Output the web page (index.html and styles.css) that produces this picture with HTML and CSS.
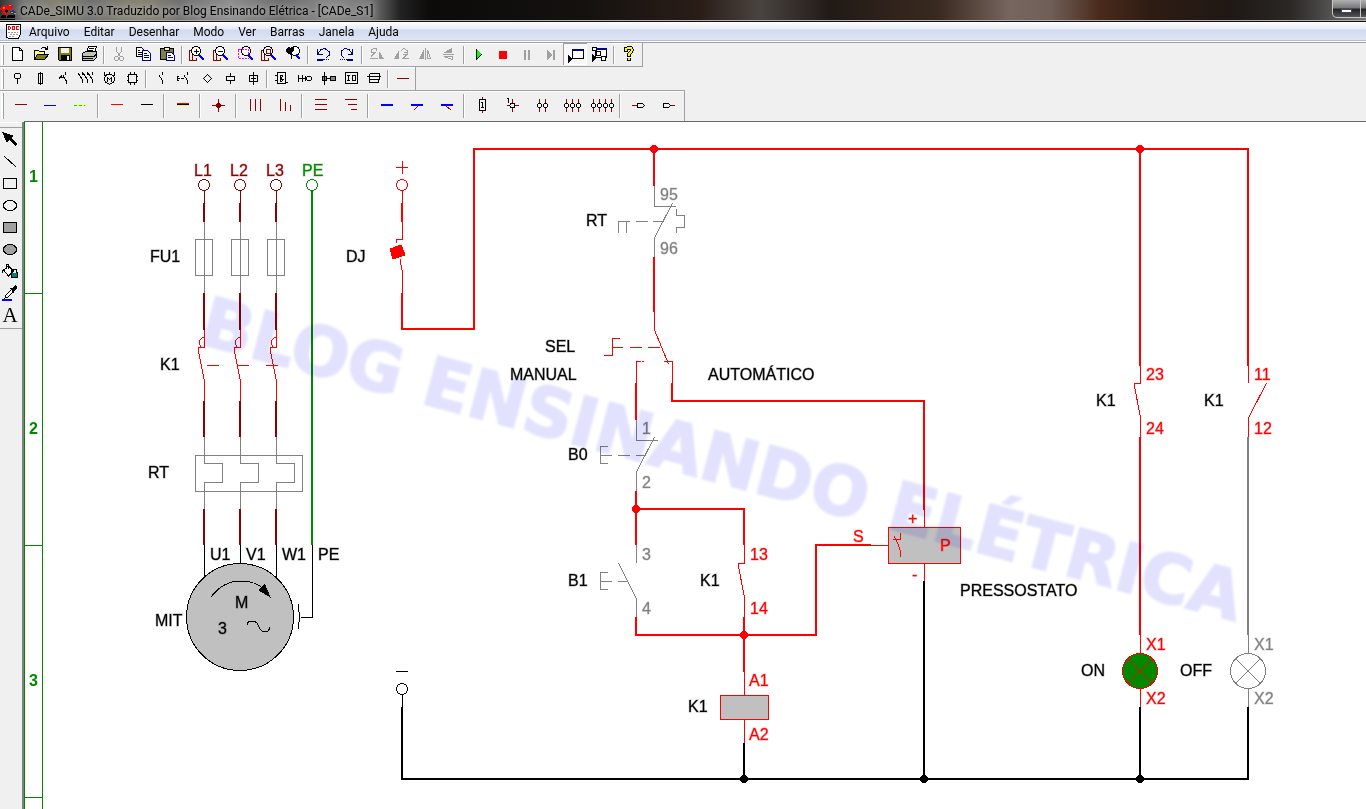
FILE: index.html
```html
<!DOCTYPE html>
<html lang="pt-BR">
<head>
<meta charset="utf-8">
<title>CADe_SIMU 3.0 Traduzido por Blog Ensinando Elétrica - [CADe_S1]</title>
<link rel="stylesheet" href="styles.css">
</head>
<body>
<header class="titlebar">
  <svg class="app-icon" viewBox="0 0 18 18" aria-hidden="true"><path fill="#e01010" d="M1 5l3-2 3 1 3-2 3 3-2 3-3 1v3l-3 1-3-2 1-2-3-1z"/><path fill="#ff6a50" d="M3 5h2v2H3zM9 3h2v1H9z"/><path fill="#000" d="M5 8l2-1 1 2-2 2zM2 13h4v3H1zM8 13h7v3H7z"/><path fill="#283080" d="M10 9l3-1 3 3-1 2-4-1z"/><path fill="#c8a020" d="M11 10h2v1h-2zM14 11h2v1h-2z"/><path stroke="#000" d="M0 17.500h15"/></svg>
  <h1 class="title">CADe_SIMU 3.0 Traduzido por Blog Ensinando Elétrica - [CADe_S1]</h1>
  <div class="win-buttons">
    <button class="win-min" aria-label="Minimizar"><span class="win-glyph"></span></button>
    <button class="win-next" aria-label="Maximizar"></button>
  </div>
</header>

<nav class="menubar">
  <svg class="doc-icon" viewBox="0 0 16 16" aria-hidden="true"><path fill="#fff" stroke="#000" d="M.5 .5h14v9l-2 5h-5l-4 .5-3-2z"/><path fill="none" stroke="#f00" d="M2.500 2v4M3 2.500h1M3 5.500h1M4.500 3v2M6.500 2.500h2v3h-2zM13 2.500h-2.500v3h2.500"/><path stroke="#999" d="M2 8.500h10M4 10.500h8M3 12.500h6" stroke-dasharray="2 1"/></svg>
  <button>Arquivo</button><button>Editar</button><button>Desenhar</button><button>Modo</button><button>Ver</button><button>Barras</button><button>Janela</button><button>Ajuda</button>
</nav>

<div class="toolbars">
  <div class="bar bar-main" role="toolbar" aria-label="Principal">
    <button aria-label="Novo"><svg viewBox="0 0 20 20"><path class="k w" d="M5.500 3.500h7l3 3v9.500h-10zM12.500 3.500v3h3"/></svg></button>
    <button aria-label="Abrir"><svg viewBox="0 0 20 20"><path class="k" fill="#ffff80" d="M3.500 15.500v-9h4l1 1h5v3"/><path class="k" fill="#808000" d="M3.500 15.500l3-5h11l-4 5z"/><path class="k" d="M10 4.500l2-1h2l2 2M16.500 2v4M14 5.500h2"/></svg></button>
    <button aria-label="Salvar"><svg viewBox="0 0 20 20"><path class="k" fill="#808000" d="M3.500 3.500h13v13h-12l-1-1z"/><path fill="#f0f0f0" d="M6 4h8v5H6z"/><path fill="#000" d="M6 11h9v6H6z"/><path fill="#f0f0f0" d="M12 12h2v4h-2z"/></svg></button>
    <button aria-label="Imprimir"><svg viewBox="0 0 20 20"><path class="k w" d="M7.500 9l2-6.500h8l-2 6.500M10 4.500h5M9 6.500h5"/><path class="k" fill="#c0c0c0" d="M3.500 9.500l3-2h11v6l-3 3h-11z"/><path class="k" d="M3 12.500h12M15 12.500l3-3M4 14.500h10"/><path stroke="#e0d000" d="M9 13.500h3"/></svg></button>
    <span class="sep"></span>
    <button aria-label="Recortar" disabled><svg viewBox="0 0 20 20"><path class="g" d="M7.500 3v4l4 6M12.500 3v4l-4 6"/><circle class="g" cx="7.500" cy="14.500" r="2"/><circle class="g" cx="12.500" cy="14.500" r="2"/></svg></button>
    <button aria-label="Copiar"><svg viewBox="0 0 20 20"><path class="k w" d="M3.500 3.500h5l3 3v6h-8zM5 6.500h2M5 8.500h4M5 10.500h4"/><path class="n w" d="M9.500 6.500h5l3 3v7h-8zM11 9.500h3M11 11.500h5M11 13.500h5"/></svg></button>
    <button aria-label="Colar"><svg viewBox="0 0 20 20"><path class="k" fill="#808040" d="M3.500 4.500h13v11h-13z"/><path class="k" fill="#ffff60" d="M7.500 3.500h5v3h-5z"/><path class="n w" d="M9.500 8.500h5l3 3v5h-8zM11 11.500h3M11 13.500h5"/></svg></button>
    <span class="sep"></span>
    <button aria-label="Aumentar zoom"><svg viewBox="0 0 20 20"><path class="r" d="M2.500 6v11M2 6.500h3M2.500 16.500h7v-3M5.500 11v5M2 16h8"/><circle class="k w" cx="9" cy="7" r="4.500"/><path class="k" d="M7 7.500h5M9.500 5v5"/><path class="b2" d="M12 11l5 5"/></svg></button>
    <button aria-label="Diminuir zoom"><svg viewBox="0 0 20 20"><path class="r" d="M2.500 6v11M2 6.500h3M2.500 16.500h7v-3M5.500 11v5M2 16h8"/><circle class="k w" cx="9" cy="7" r="4.500"/><path class="k" d="M7 7.500h5"/><path class="b2" d="M12 11l5 5"/></svg></button>
    <button aria-label="Zoom da janela"><svg viewBox="0 0 20 20"><circle class="k w" cx="11" cy="7" r="4.500"/><path fill="none" stroke="#f0f" stroke-dasharray="2 1" d="M3.500 5.500h10v9h-10z"/><path class="b2" d="M13 11l5 5"/></svg></button>
    <button aria-label="Zoom da página"><svg viewBox="0 0 20 20"><path class="r" d="M2.500 6v11M2 6.500h3M2.500 16.500h7v-3M5.500 11v5M2 16h8"/><circle class="k w" cx="9" cy="7" r="4.500"/><path class="r" d="M7.500 5.500h4v4h-4z"/><path class="b2" d="M12 11l5 5"/></svg></button>
    <button aria-label="Zoom anterior"><svg viewBox="0 0 20 20"><circle class="k w" cx="12" cy="7" r="4.500"/><path fill="#000" d="M3 5l2-2 4 1 2-1v3l-2 3-1 3-2-2-3-2z"/><path class="k" d="M9 9l-1 6"/><path class="b2" d="M13 11l4 4"/></svg></button>
    <span class="sep"></span>
    <button aria-label="Desfazer"><svg viewBox="0 0 20 20"><path class="n" d="M4.500 5v5h5M5 9.500l3-4 4-1 4 3v4l-3 2M4 15.500h7"/><path class="n" d="M4 16.500h6"/><path class="n" stroke-dasharray="1 1" d="M11 15.500h6"/></svg></button>
    <button aria-label="Refazer"><svg viewBox="0 0 20 20"><path class="n" d="M15.500 5v5h-5M15 9.500l-3-4-4-1-4 3v4l3 2M9 15.500h7"/><path class="n" d="M10 16.500h6"/><path class="n" stroke-dasharray="1 1" d="M3 15.500h6"/></svg></button>
    <span class="sep"></span>
    <button aria-label="Girar à esquerda" disabled><svg viewBox="0 0 20 20"><path class="g" d="M4.500 8v-2l2-1.500h3v2M4 8.500h5M4 12.500l4-4M3 14.500h8"/><path fill="#a0a0a0" d="M12 7l5 8h-5z"/></svg></button>
    <button aria-label="Girar à direita" disabled><svg viewBox="0 0 20 20"><path fill="#a0a0a0" d="M8 6v9H3z"/><path class="g" d="M10 6.500l3-2 3 2v3M13 8.500h4M11.500 10.500h5l-5 4h6"/></svg></button>
    <button aria-label="Espelhar na horizontal" disabled><svg viewBox="0 0 20 20"><path fill="#a0a0a0" d="M9 5v10H4zM10 4h1v12h-1z"/><path class="g" d="M12.500 6v8.500h3z"/></svg></button>
    <button aria-label="Espelhar na vertical" disabled><svg viewBox="0 0 20 20"><path fill="#a0a0a0" d="M4 9l9-5v5zM4 10h11v1H4z"/><path class="g" d="M5 12.500h8v3z"/></svg></button>
    <span class="sep"></span>
    <button aria-label="Simular"><svg viewBox="0 0 20 20"><path fill="#000" d="M7 5l6 5-5 6H7z"/><path fill="#0f0" d="M8 6l4 4-4 5z"/></svg></button>
    <button aria-label="Parar"><svg viewBox="0 0 20 20"><path fill="#f00" d="M6 7h8v8H6z"/></svg></button>
    <button aria-label="Pausar" disabled><svg viewBox="0 0 20 20"><path fill="#a0a0a0" d="M7 6h2v10H7zM11 6h2v10h-2z"/></svg></button>
    <button aria-label="Passo a passo" disabled><svg viewBox="0 0 20 20"><path fill="#a0a0a0" d="M6 6l5 5-5 5zM12 6h2v10h-2z"/></svg></button>
    <button class="pressed" aria-label="Janela do componente" aria-pressed="true"><svg viewBox="0 0 20 20"><path class="k w" d="M7.500 5.500h11v9h-11z"/><path fill="#00a" d="M8 5h10v2H8z"/><path fill="#000" d="M3 11l4 4-4 4z"/></svg></button>
    <button aria-label="Árvore de componentes"><svg viewBox="0 0 20 20"><path class="k w" d="M6.500 4.500h11v9h-11z"/><path fill="#008" d="M7 4h11v2H7z"/><path class="k w" d="M3.500 3.500h4v3h-4zM7.500 7.500h4v4h-4zM12.500 12.500h4v4h-4z"/><path fill="#000" d="M3 10l5 4-5 4z"/></svg></button>
    <span class="sep"></span>
    <button aria-label="Ajuda do programa"><svg viewBox="0 0 20 20"><path fill="none" stroke="#000" stroke-width="4" d="M7 8V5l2-1h3l1 2-1 2-2 2v3M10 14v3"/><path fill="none" stroke="#ff0" stroke-width="2" d="M7 7V5l2-1h3l1 2-1 2-2 2v2M10 14v2"/></svg></button>
  </div>

  <div class="bar bar-parts" role="toolbar" aria-label="Componentes">
    <button aria-label="Alimentação"><svg viewBox="0 0 20 20"><circle class="k" cx="10.500" cy="8" r="3"/><path class="k" d="M10.500 11v5"/></svg></button>
    <button aria-label="Fusíveis"><svg viewBox="0 0 20 20"><path class="k" d="M8.500 5.500h4v10h-4zM10.500 4v13"/></svg></button>
    <button aria-label="Disjuntores"><svg viewBox="0 0 20 20"><path class="k" d="M12.500 4v3M10 7.500l3 5v3M6 10.500l3-3M7 9.500h4"/></svg></button>
    <button aria-label="Contatores de potência"><svg viewBox="0 0 20 20"><path class="k" d="M6.500 4v3M2 5l4 6v4M11.500 4v3M7 5l4 6v4M16.500 4v3M12 5l4 6v4"/></svg></button>
    <button aria-label="Motores"><svg viewBox="0 0 20 20"><circle class="k" cx="10.500" cy="11" r="5"/><path class="k" d="M8.500 13.500v-4l2 2 2-2v4M5.500 4v4M10.500 4v2M15.500 4v4"/></svg></button>
    <button aria-label="Eletrônica de potência"><svg viewBox="0 0 20 20"><path class="k" d="M6.500 6.500h8v8h-8zM8.500 4v2M12.500 4v2M8.500 15v2M12.500 15v2M5 8.500h1M5 12.500h1M15 8.500h1M15 12.500h1"/></svg></button>
    <span class="sep"></span>
    <button aria-label="Contatos"><svg viewBox="0 0 20 20"><path class="k" d="M11.500 4v3M8 7l3 5v4"/></svg></button>
    <button aria-label="Botões"><svg viewBox="0 0 20 20"><path class="k" d="M13.500 4v3M10 7l3 5v4M5 8.500h-2v4h2M3 10.500h3M7 10.500h3"/></svg></button>
    <button aria-label="Sensores"><svg viewBox="0 0 20 20"><path class="k" d="M10.500 6.500l4 4-4 4-4-4z"/></svg></button>
    <button aria-label="Bobinas"><svg viewBox="0 0 20 20"><path class="k" d="M6.500 8.500h8v4h-8zM10.500 5v3M10.500 13v3"/></svg></button>
    <button aria-label="Sinalizadores"><svg viewBox="0 0 20 20"><path class="k" d="M6.500 7.500h8v6h-8zM10.500 4v13M8 10.500h5"/></svg></button>
    <span class="sep"></span>
    <button aria-label="Portas lógicas"><svg viewBox="0 0 20 20"><path class="k" d="M5.500 4.500h8v11h-8zM3 7.500h3M3 12.500h3M13 14.500h3M11 13l-3-4 1-2h1v2l-2 2v2h2l2-2"/></svg></button>
    <button aria-label="Eletropneumática"><svg viewBox="0 0 20 20"><path class="k" d="M3.500 7v7M3 10.500h9M7.500 7v7M10.500 8v5"/><circle class="k" cx="14" cy="10.500" r="2.500"/></svg></button>
    <button aria-label="Eixos"><svg viewBox="0 0 20 20"><path class="k" fill="#888" d="M4.500 8.500h4v4h-4zM12.500 8.500h5v4h-5z"/><path class="k" d="M8 10.500h5M6.500 4v13"/></svg></button>
    <button aria-label="Entradas e saídas"><svg viewBox="0 0 20 20"><path class="k" d="M4.500 4.500h12v11h-12zM6 7.500h3M7.500 7v6M6 12.500h3M11.500 7.500h3v5h-3z"/></svg></button>
    <button aria-label="Cabos"><svg viewBox="0 0 20 20"><path class="k" d="M5.500 5.500h10v6h-10v-6M3 8.500h14M5.500 11v3h8M14.500 12v3"/></svg></button>
    <span class="sep"></span>
    <button aria-label="Condutor"><svg viewBox="0 0 20 20"><path fill="#900000" d="M4 10h12v1H4z"/></svg></button>
  </div>

  <div class="bar bar-wires" role="toolbar" aria-label="Condutores">
    <button aria-label="Fio de fase"><svg viewBox="0 0 20 20"><path fill="#900000" d="M5 9h12v1H5z"/></svg></button>
    <button aria-label="Fio neutro"><svg viewBox="0 0 20 20"><path fill="#00f" d="M4 10h12v1H4z"/></svg></button>
    <button aria-label="Fio terra"><svg viewBox="0 0 20 20"><path fill="#ff0" d="M4 10h12v1H4z"/><path fill="#0d0" d="M4 10h3v1H4zM9 10h3v1H9zM14 10h1v1h-1z"/></svg></button>
    <span class="sep"></span>
    <button aria-label="Fio positivo"><svg viewBox="0 0 20 20"><path fill="#f00" d="M5 9h12v1H5z"/></svg></button>
    <button aria-label="Fio negativo"><svg viewBox="0 0 20 20"><path fill="#000" d="M5 9h12v1H5z"/></svg></button>
    <span class="sep"></span>
    <button aria-label="Cabo múltiplo"><svg viewBox="0 0 20 20"><path fill="#f00" d="M5 8h12v1H5z"/><path fill="#000" d="M5 9h12v1H5z"/><path fill="#ff0" d="M5 10h12v1H5z"/></svg></button>
    <span class="sep"></span>
    <button aria-label="Conexão"><svg viewBox="0 0 20 20"><path class="r" d="M4 10.500h13M10.500 4v13"/><circle cx="10.500" cy="10.500" r="2.500" fill="#800000"/></svg></button>
    <span class="sep"></span>
    <button aria-label="Três fases verticais"><svg viewBox="0 0 20 20"><path class="r" d="M6.500 4v12M11.500 4v12M16.500 4v12"/></svg></button>
    <button aria-label="Três fases em degrau"><svg viewBox="0 0 20 20"><path class="r" d="M6.500 4v12M11.500 7v9M16.500 10v6"/></svg></button>
    <span class="sep"></span>
    <button aria-label="Três fases horizontais"><svg viewBox="0 0 20 20"><path class="r" d="M5 4.500h12M5 9.500h12M5 14.500h12"/></svg></button>
    <button aria-label="Derivação de fases"><svg viewBox="0 0 20 20"><path class="r" d="M5 4.500h12M8 9.500h9M11 14.500h6"/></svg></button>
    <span class="sep"></span>
    <button aria-label="Barramento"><svg viewBox="0 0 20 20"><path class="b2" d="M5 10h12"/></svg></button>
    <button aria-label="Derivação à esquerda"><svg viewBox="0 0 20 20"><path class="b2" d="M5 10h12"/><path class="r" d="M12 11l-4 4"/></svg></button>
    <button aria-label="Derivação à direita"><svg viewBox="0 0 20 20"><path class="b2" d="M5 10h12"/><path class="r" d="M10 11l5 4"/></svg></button>
    <span class="sep"></span>
    <button aria-label="Borne retangular"><svg viewBox="0 0 20 20"><path class="k" d="M7.500 4.500h6v11h-6zM9 7.500h1.500v5M9 12.500h3"/><path class="r" d="M10.500 2v2M10.500 16v2"/></svg></button>
    <button aria-label="Borne numerado"><svg viewBox="0 0 20 20"><path class="r" d="M10.500 4v4M10.500 13v4M5 10.500h3M13 10.500h4"/><circle class="k" cx="10.500" cy="10.500" r="2.500"/><path class="k" d="M5 3.500h1.500V8"/></svg></button>
    <button aria-label="Dois bornes"><svg viewBox="0 0 20 20"><path class="r" d="M7.500 4v13M13.500 4v13"/><circle class="k w" cx="7.500" cy="10.500" r="2"/><circle class="k w" cx="13.500" cy="10.500" r="2"/></svg></button>
    <button aria-label="Três bornes"><svg viewBox="0 0 20 20"><path class="r" d="M4.500 4v13M10.500 4v13M16.500 4v13"/><circle class="k w" cx="4.500" cy="10.500" r="2"/><circle class="k w" cx="10.500" cy="10.500" r="2"/><circle class="k w" cx="16.500" cy="10.500" r="2"/></svg></button>
    <button aria-label="Quatro bornes"><svg class="wide" viewBox="0 0 24 20"><path class="r" d="M3.500 4v13M9.500 4v13M15.500 4v13M21.500 4v13"/><circle class="k w" cx="3.500" cy="10.500" r="2"/><circle class="k w" cx="9.500" cy="10.500" r="2"/><circle class="k w" cx="15.500" cy="10.500" r="2"/><circle class="k w" cx="21.500" cy="10.500" r="2"/></svg></button>
    <span class="sep"></span>
    <button aria-label="Etiqueta de entrada"><svg viewBox="0 0 20 20"><path class="r" d="M4 10.500h5"/><path class="k" d="M9.500 8.500h5l2 2-2 2h-5z"/></svg></button>
    <button aria-label="Etiqueta de saída"><svg viewBox="0 0 20 20"><path class="r" d="M12 10.500h5"/><path class="k" d="M5.500 8.500h5l2 2-2 2h-5z"/></svg></button>
  </div>
</div>

<main class="workspace">
  <aside class="toolbox" role="toolbar" aria-label="Desenho">
    <button aria-label="Selecionar"><svg viewBox="0 0 20 20"><path fill="#000" d="M2 3l12 4-3 2 6 6-2 2-6-6-2 3z"/></svg></button>
    <button aria-label="Linha"><svg viewBox="0 0 20 20"><path class="k" d="M4 5l12 11"/></svg></button>
    <button aria-label="Retângulo"><svg viewBox="0 0 20 20"><path class="k" d="M3.500 5.500h13v10h-13z"/></svg></button>
    <button aria-label="Elipse"><svg viewBox="0 0 20 20"><ellipse class="k" cx="10" cy="10.500" rx="6.500" ry="5"/></svg></button>
    <button aria-label="Retângulo cheio"><svg viewBox="0 0 20 20"><path fill="#a0a0a0" stroke="#000" d="M3.500 5.500h13v10h-13z"/></svg></button>
    <button aria-label="Elipse cheia"><svg viewBox="0 0 20 20"><ellipse fill="#a0a0a0" stroke="#000" cx="10" cy="10.500" rx="6.500" ry="5"/></svg></button>
    <button aria-label="Preencher"><svg viewBox="0 0 20 20"><path class="k w" d="M3.500 9l5-4 5 5-5 5z"/><path class="k" d="M6.500 8V3h2v5M3 9l-1 3"/><path fill="#008080" d="M12 12h5v5h-5z"/><path class="k" d="M11 8.500h5l1 3v5h-6z"/></svg></button>
    <button aria-label="Cor da linha"><svg viewBox="0 0 20 20"><path stroke="#00f" stroke-width="2" d="M2 17h10"/><path class="k w" d="M5 15l1-3 6-6 2 2-6 6z"/><path fill="#000" d="M10 5l2 0 3-3 2 1v2l-3 3v3z"/></svg></button>
    <button class="text-tool" aria-label="Texto">A</button>
  </aside>

  <ol class="ruler">
    <li class="ruler-first">1</li><li>2</li><li>3</li><li class="ruler-last"></li>
  </ol>

  <svg class="canvas" viewBox="43 122 1323 687" preserveAspectRatio="xMinYMin meet" role="img" aria-label="Esquema de partida de motor com pressostato">
    <defs>
      <g id="phase-line">
        <g class="wine"><circle cx="0" cy="185" r="5.500"/><path d="M.5 191v12"/><path class="thick" d="M0 203v19M0 293v37M0 401v36M0 509v36"/></g>
        <path class="grey" d="M.5 222v71M-8.500 239.500h17v36h-17zM.5 437v26.500h18v19H.5V509"/>
        <path class="red" d="M.5 330v17.500h-6v4l6 29.500v20M.5 337.500h-2l-3 3v4l2 3"/>
      </g>
      <g id="closed-contact"><path d="M.5 0v18.500h-6v3l6 31V72"/></g>
    </defs>

    <!-- Power circuit -->
    <use href="#phase-line" x="204"/><use href="#phase-line" x="240"/><use href="#phase-line" x="276"/>
    <path class="red" d="M207 365.500h12M238 365.500h11M266 365.500h12"/>
    <path class="grey" d="M195.500 455.500h107v36h-107z"/>
    <g class="green"><circle cx="312" cy="185" r="5.500"/><path class="thick" d="M312 191v354"/></g>
    <path class="black" d="M204.500 545v35M240.500 545v20M276.500 545v35M312.500 545v72.500H301M298.500 604v8M299.500 612v10M298.500 622v7"/>
    <circle class="black metal" cx="240" cy="617" r="53.500"/>
    <path class="black" d="M211 597q12-16 30-16 15 0 24 9M247 625q0-4 5-4t7 6q2 5 6 5t5-5"/>
    <path d="M258 590l7-6 6 14z"/>

    <!-- Control circuit: energised wires -->
    <g class="red">
      <path d="M396 167.500h12M402.500 161v13"/>
      <circle cx="402" cy="185" r="5.500"/>
      <path d="M402.500 191v12M402.500 222v17.500h-6v3M400 259l2.500 14v20"/>
      <path class="fill-red" d="M390 249l11-4 4 10-12 4z"/>
      <path class="thick" d="M402 203v19M402 293v36h72V149h774v217M654 149v37M654 257v55"/>
      <path d="M654.500 312v18l14 34M604 355.500h8.500v-17h7M612 347.500h11M630 347.500h12M648 347.500h12"/>
      <path d="M636.500 383v-21.500h4M642 361.500h2M664 361.500h8.500V383"/>
      <path class="thick" d="M636 383v37M672 383v18h252v109M636 491v54M636 509h108v36M636 617v18h180v-90h55M744 617v55"/>
      <use href="#closed-contact" x="744" y="545"/>
      <path d="M744.500 672v23M744.500 719v24M871 545.500h17M924.500 510v17M924.500 563v18"/>
      <path class="metal" d="M720.500 695.500h48v24h-48zM888.500 527.500h72v36h-72z"/>
      <path d="M900.500 533v6.500h-8M894 536l4 8 2.500 7v6"/>
      <path class="thick" d="M1140 149v217M1140 437v198"/>
      <use href="#closed-contact" x="1140" y="365"/>
      <path d="M1248.500 366v17M1266.500 383l-18 35v19M1140.500 635v18M1140.500 689v18"/>
      <circle class="lamp-on" cx="1140" cy="671" r="17.500"/>
      <path d="M1127 658l26 26M1127 684l26-26"/>
    </g>

    <!-- Control circuit: idle parts -->
    <g class="grey">
      <path d="M654.500 186v20.500h21M672.500 203l-18 35v19M618.500 233v-11.500h11M626.500 221v12M636 221.500h12M653 221.500h11M676.500 209v6.500h8v12h-8v5"/>
      <path d="M636.500 420v20.500h21M654.500 437l-18 35v19M608 446.500h-7.500v17h7.500M601 455.500h11M618 455.500h12M636 455.500h9"/>
      <path d="M636.500 545v18M618.500 563l18 36v18M608 572.500h-7.500v17h7.500M601 581.500h11M618 581.500h9"/>
      <path class="thick" d="M1248 437v198"/>
      <path d="M1248.500 635v18M1248.500 689v18M1235 658l26 26M1235 684l26-26"/>
      <circle cx="1248" cy="671" r="17.500"/>
    </g>

    <!-- Return line -->
    <g class="black">
      <path d="M396 671.500h12M402.500 694v14"/>
      <circle cx="402" cy="689" r="5.500"/>
      <path class="thick" d="M402 707v72h846v-72M744 743v36M924 581v198M1140 707v72"/>
    </g>
    <g class="dots-red"><circle cx="654" cy="149" r="4"/><circle cx="1140" cy="149" r="4"/><circle cx="636" cy="509" r="4"/><circle cx="744" cy="635" r="4"/></g>
    <g class="dots"><circle cx="744" cy="779" r="4"/><circle cx="924" cy="779" r="4"/><circle cx="1140" cy="779" r="4"/></g>

    <g class="label">
      <text x="150" y="262">FU1</text><text x="346" y="262">DJ</text><text x="160" y="370">K1</text><text x="148" y="478">RT</text><text x="155" y="626">MIT</text>
      <text x="210" y="560">U1</text><text x="246" y="560">V1</text><text x="282" y="560">W1</text><text x="318" y="560">PE</text>
      <text x="235" y="608">M</text><text x="218" y="634">3</text>
      <text x="586" y="226">RT</text><text x="545" y="352">SEL</text><text x="510" y="380">MANUAL</text><text x="708" y="380">AUTOMÁTICO</text>
      <text x="568" y="460">B0</text><text x="568" y="586">B1</text><text x="700" y="586">K1</text><text x="688" y="712">K1</text><text x="960" y="596">PRESSOSTATO</text>
      <text x="1096" y="406">K1</text><text x="1204" y="406">K1</text><text x="1081" y="676">ON</text><text x="1180" y="676">OFF</text>
    </g>
    <g class="label label-wine"><text x="194" y="176">L1</text><text x="230" y="176">L2</text><text x="266" y="176">L3</text></g>
    <g class="label label-green"><text x="302" y="176">PE</text></g>
    <g class="label label-grey">
      <text x="660" y="200">95</text><text x="660" y="254">96</text><text x="642" y="434">1</text><text x="642" y="488">2</text><text x="642" y="560">3</text><text x="642" y="614">4</text>
      <text x="1254" y="650">X1</text><text x="1254" y="704">X2</text>
    </g>
    <g class="label label-red">
      <text x="750" y="560">13</text><text x="750" y="614">14</text><text x="749" y="686">A1</text><text x="749" y="740">A2</text><text x="853" y="542">S</text><text x="940" y="551">P</text>
      <text x="908" y="524">+</text><text x="912" y="580">-</text>
      <text x="1146" y="380">23</text><text x="1146" y="434">24</text><text x="1254" y="380">11</text><text x="1254" y="434">12</text><text x="1146" y="650">X1</text><text x="1146" y="704">X2</text>
    </g>
    <text class="watermark" transform="translate(197 343) rotate(15)">BLOG ENSINANDO ELÉTRICA</text>
  </svg>
</main>
</body>
</html>
```
FILE: styles.css
```css
* { box-sizing: border-box; }

body {
  margin: 0;
  height: 100vh;
  display: flex;
  flex-direction: column;
  overflow: hidden;
  background: #f0f0f0;
  font-family: Roboto, "Open Sans", sans-serif;
  font-size: 12px;
  color: #000;
}

button {
  margin: 0;
  padding: 0;
  border: 0;
  background: none;
  font: inherit;
  color: inherit;
}

/* Title bar */
.titlebar {
  display: flex;
  align-items: center;
  height: 22px;
  flex: none;
  border-bottom: 1px solid #111;
  box-shadow: inset 0 -1px #b0aaa8;
  background: linear-gradient(90deg, #333 0, #777 24px, #858270 60px, #6e6e6e 90px, #8a8672 140px, #707070 180px, #909090 230px, #6c6c6c 280px, #888 330px, #777 370px, #222 400px, #0c0b0a 430px, #14110f 580px, #2a1d18 700px, #4a4440 760px, #211a16 830px, #3a2a20 940px, #776660 1010px, #705f58 1050px, #4a2a1c 1100px, #2e1c14 1150px, #1f1814 1230px, #2a2725 1290px, #777 1366px);
}
.app-icon { width: 18px; height: 18px; margin-right: 2px; }
.title {
  flex: 1;
  margin: 0;
  font-size: 12px;
  font-weight: 400;
  line-height: 20px;
  white-space: nowrap;
  text-shadow: 0 0 6px #ccc, 0 0 10px #aaa;
}
.win-buttons { display: flex; align-self: flex-start; }
.win-min, .win-next {
  height: 18px;
  border: 1px solid #c8c8c8;
  border-top: 0;
  background: linear-gradient(#b0b0b0 0, #777 8px, #222 9px, #555 17px);
}
.win-min {
  display: flex;
  justify-content: center;
  align-items: flex-end;
  width: 29px;
  padding-bottom: 4px;
  border-radius: 0 0 0 5px;
}
.win-next { width: 5px; border-left: 0; border-right: 0; }
.win-glyph { width: 11px; height: 4px; background: #fff; border: 1px solid #446; }

/* Menu */
.menubar {
  display: flex;
  align-items: center;
  gap: 14px;
  height: 21px;
  flex: none;
  padding-left: 6px;
  border-bottom: 1px solid #a0a0a0;
  box-shadow: inset 0 -1px #fff, inset 0 -2px #b4bcd6;
  background: linear-gradient(#fff 0, #e6eaf4 7px, #d1daef 8px, #dfe5f6 18px);
}
.menubar button { line-height: 18px; }
.doc-icon { width: 16px; height: 16px; margin-right: -7px; }

/* Toolbars */
.toolbars {
  flex: none;
  display: flex;
  flex-direction: column;
  align-items: flex-start;
  background: #f0f0f0;
}
.bar {
  display: flex;
  align-items: center;
  padding: 0 1px 1px;
  border-right: 1px solid #a0a0a0;
  box-shadow: inset 0 1px #fff;
}
.bar::before {
  content: "";
  width: 2px;
  align-self: stretch;
  margin: 2px 1px 0 0;
  border-right: 1px solid #a0a0a0;
  background: #fff;
}
.bar svg { display: block; width: 20px; height: 20px; flex: none; }
.bar svg.wide { width: 24px; }
.bar button {
  display: flex;
  justify-content: center;
  align-items: center;
  width: 24px;
  height: 20px;
}
.bar-main { height: 24px; border-bottom: 1px solid #a0a0a0; }
.bar-main .pressed {
  align-self: stretch;
  height: auto;
  background: #f8f8f8;
  box-shadow: inset 1px 1px #a0a0a0, inset -1px -1px #fff;
}
.bar-parts { height: 23px; }
.bar-parts button { width: 23px; }
.bar-wires { height: 32px; padding-bottom: 3px; border-top: 1px solid #a0a0a0; }
.bar-wires button { width: 30px; }
.sep {
  width: 6px;
  align-self: stretch;
  margin: 3px 0 1px;
  background: linear-gradient(90deg, transparent 2px, #a0a0a0 2px 3px, #fff 3px 4px, transparent 4px);
}

/* Icon strokes */
svg { shape-rendering: crispEdges; }
.k { stroke: #000; }
.k:not([fill]) { fill: none; }
.g { fill: none; stroke: #a0a0a0; }
.n { fill: none; stroke: #000090; }
.r { fill: none; stroke: #900000; }
.b2 { fill: none; stroke: #00f; stroke-width: 2; }
.k.w:not([fill]), .n.w { fill: #fff; }

/* Workspace */
.workspace { flex: 1; min-height: 0; display: flex; }
.toolbox {
  flex: none;
  width: 24px;
  border-right: 2px solid #808080;
  box-shadow: inset 0 1px #fff;
}
.toolbox::before {
  content: "";
  display: block;
  height: 4px;
  border-top: 1px solid #fff;
  border-bottom: 1px solid #a0a0a0;
}
.toolbox button {
  display: flex;
  justify-content: center;
  align-items: center;
  width: 20px;
  height: 22px;
}
.toolbox svg { width: 20px; height: 20px; }
.toolbox::after { content: ""; display: block; width: 22px; height: 1px; margin-top: 2px; background: #a0a0a0; }
.toolbox .text-tool { font-family: "Liberation Serif", serif; font-size: 21px; font-weight: 400; }

.ruler {
  flex: none;
  display: flex;
  flex-direction: column;
  width: 19px;
  margin: 0;
  padding: 0;
  list-style: none;
  overflow: hidden;
  border: solid #008800;
  border-width: 0 1px;
  background: #fff;
  font-family: "Liberation Sans", Arial, sans-serif;
  font-size: 16px;
  font-weight: 700;
  color: #008800;
}
.ruler li {
  flex: none;
  display: flex;
  justify-content: center;
  align-items: flex-end;
  height: 252px;
  padding-bottom: 107px;
  border-bottom: 1px solid #008800;
  line-height: 18px;
}
.ruler .ruler-first { height: 172px; }
.ruler .ruler-last { border-bottom: 0; }

/* Schematic */
.canvas {
  flex: 1;
  min-width: 0;
  height: 100%;
  background: #fff;
}
.ruler, .canvas { box-shadow: 0 -1px #666; }
.canvas .red, .canvas .grey, .canvas .wine, .canvas .green, .canvas .black { fill: none; }
.canvas .red { stroke: #f00; }
.canvas .grey { stroke: #808080; }
.canvas .wine { stroke: #8b0000; }
.canvas .green { stroke: #008800; }
.canvas .black { stroke: #000; }
.canvas .thick { stroke-width: 2; }
.canvas .metal { fill: #c0c0c0; }
.canvas .fill-red { fill: #f00; }
.canvas .lamp-on { fill: #008800; }
.dots-red { fill: #f00; }
.label {
  font-family: "Liberation Sans", Arial, sans-serif;
  font-size: 16px;
  color: #000;
  fill: currentColor;
  stroke: currentColor;
  stroke-width: 1px;
  stroke-opacity: 0.35;
}
.label-wine { color: #8b0000; }
.label-green { color: #008800; }
.label-grey { color: #808080; }
.label-red { color: #f00; }
.watermark {
  font-family: "DejaVu Sans", sans-serif;
  font-size: 68px;
  font-weight: 700;
  fill: #e2e2ff;
  stroke: #e2e2ff;
  stroke-width: 2px;
  filter: blur(1px);
  mix-blend-mode: multiply;
}
```
